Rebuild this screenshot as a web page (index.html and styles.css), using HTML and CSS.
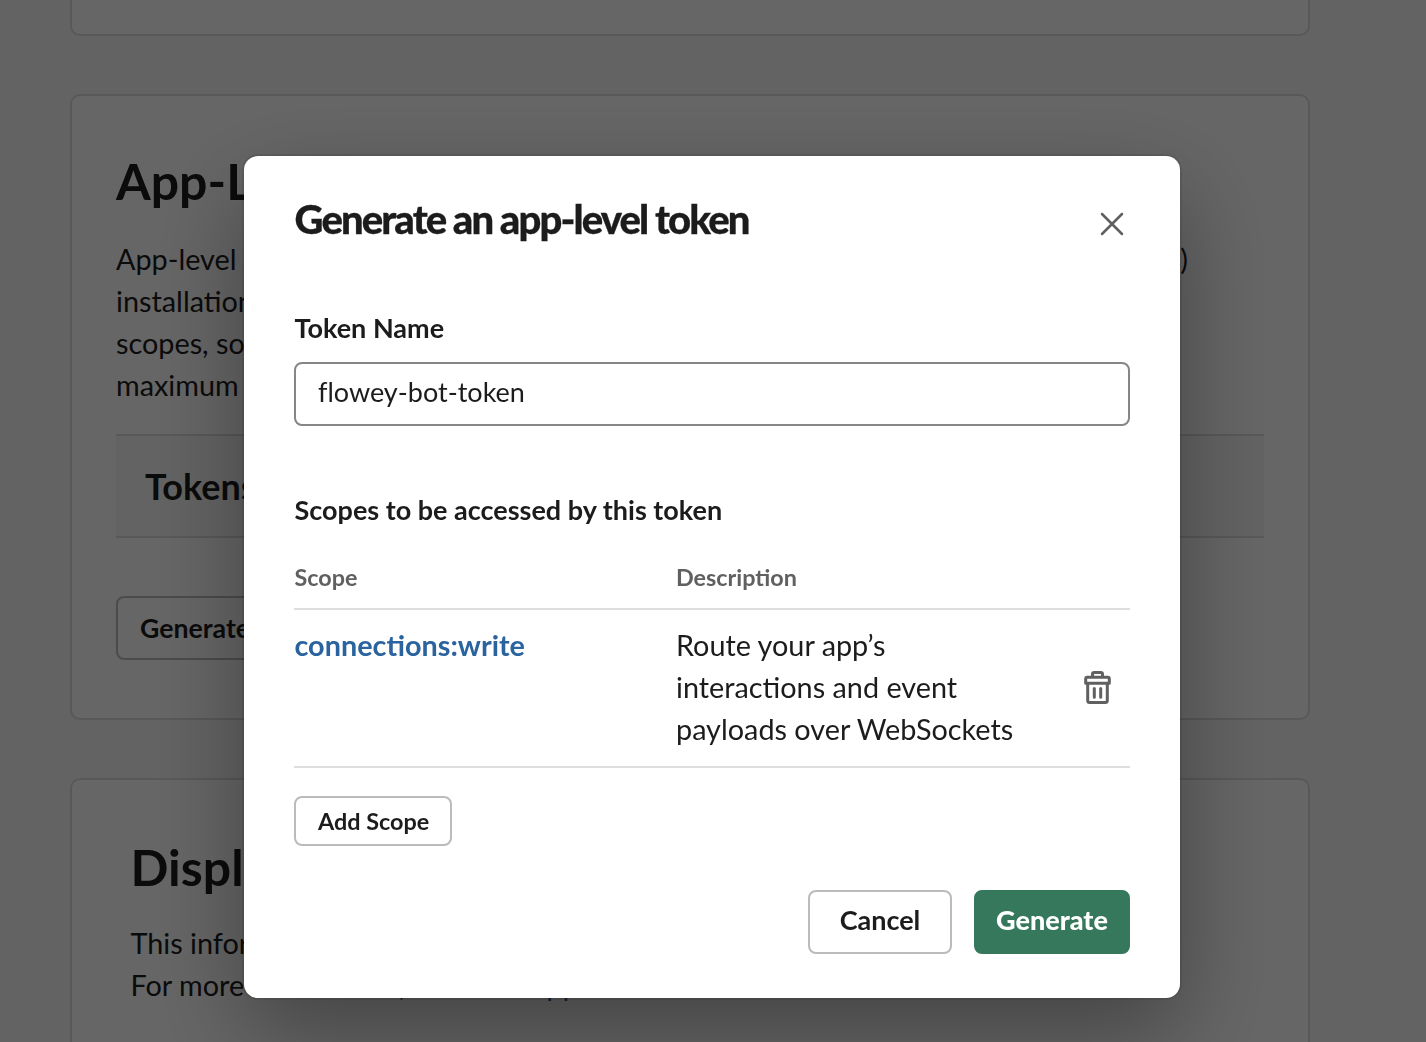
FILE: index.html
```html
<!DOCTYPE html>
<html lang="en">
<head>
<meta charset="utf-8">
<title>App-Level Tokens</title>
<link rel="stylesheet" href="styles.css">
</head>
<body>
<main class="page">
  <section class="card card-credentials"></section>
  <section class="card card-tokens">
    <h2 class="card-title">App-Level Tokens</h2>
    <p class="card-text">
      <span class="line line-split"><span>App-level tokens allow your app to use platform features</span><span>)</span></span>
      <span class="line">installations. Each app-level token can carry a set of</span>
      <span class="line">scopes, so you can create one for each use, up to a</span>
      <span class="line">maximum of 10 tokens per app.</span>
    </p>
    <div class="token-bar">Tokens</div>
    <button class="btn btn-page">Generate Token and Scopes</button>
  </section>
  <section class="card card-display">
    <h2 class="card-title">Display Information</h2>
    <p class="card-text">
      <span class="line">This information will be shown in the Slack App Directory.</span>
      <span class="line">For more information, view our <a class="guide">App Detail Guidelines</a></span>
    </p>
  </section>
</main>
<div class="overlay">
  <div class="modal" role="dialog">
    <header class="modal-head">
      <h1 class="modal-title">Generate an app-level token</h1>
      <svg class="close" viewBox="0 0 24 24"><path d="M2 2L22 22M22 2L2 22"/></svg>
    </header>
    <label class="label" for="name">Token Name</label>
    <input class="input" id="name" value="flowey-bot-token">
    <h3 class="label label-scopes">Scopes to be accessed by this token</h3>
    <div class="row row-head"><span>Scope</span><span>Description</span></div>
    <div class="row row-scope">
      <a class="scope">connections:write</a>
      <span class="desc">Route your app’s interactions and event payloads over WebSockets</span>
      <svg class="trash" viewBox="0 0 28 34"><path d="M8.500 6V3.200Q8.500 1.500 10.200 1.500H16.800Q18.500 1.500 18.500 3.200V6M3.200 6.300H23.800Q25.300 6.300 25.300 7.800V12.200H1.700V7.800Q1.700 6.300 3.200 6.300ZM3.700 12.500V29.500Q3.700 31.500 5.700 31.500H21.300Q23.300 31.500 23.300 29.500V12.500M10.300 17.500V26.300M16.700 17.500V26.300"/></svg>
    </div>
    <button class="btn btn-small">Add Scope</button>
    <footer class="actions">
      <button class="btn btn-cancel">Cancel</button>
      <button class="btn btn-primary">Generate</button>
    </footer>
  </div>
</div>
</body>
</html>
```

FILE: styles.css
```css
* { box-sizing: border-box; }
html, body { height: 100%; margin: 0; overflow: hidden; }
body {
  background: #f8f8f8;
  color: #1d1c1d;
  font-family: Lato, sans-serif;
  font-size: 28.8px;
  line-height: 42px;
}
h1, h2, h3, p { margin: 0; }
.page {
  width: 1240px;
  height: 1042px;
  margin-left: 70px;
  display: flex;
  flex-direction: column;
  gap: 58px;
  overflow: hidden;
}
.card {
  flex: none;
  background: #fff;
  border: 2px solid #ddd;
  border-radius: 10px;
}
.card-credentials { height: 36px; border-top: 0; border-radius: 0 0 10px 10px; }
.card-tokens { height: 626px; padding: 55px 44px 0; }
.card-display { height: 264px; padding: 57px 58.5px 0; border-bottom: 0; border-radius: 10px 10px 0 0; }
.card-title { font-size: 50px; line-height: 60px; font-weight: 700; white-space: nowrap; }
.card-text { margin-top: 27px; }
.card-display .card-text { margin-top: 25px; }
.line { display: block; white-space: nowrap; }
.line-split { display: flex; justify-content: space-between; width: 1072px; }
.guide { color: #1264a3; }
.token-bar {
  height: 104px;
  margin-top: 28px;
  padding: 0 29px;
  border: solid #ddd;
  border-width: 2px 0;
  background: #f8f8f8;
  font-size: 36px;
  font-weight: 700;
  line-height: 100px;
}
.btn {
  display: block;
  border: 2px solid #bbb;
  border-radius: 8px;
  background: #fff;
  color: #1d1c1d;
  font: 700 27px/30px Lato, sans-serif;
  padding: 0 22px;
  white-space: nowrap;
}
.btn-page { height: 64px; margin-top: 58px; font-size: 26.7px; }
.overlay {
  position: fixed;
  inset: 0;
  padding: 156px 0 0 244px;
  background: rgba(0, 0, 0, .6);
}
.modal {
  width: 936px;
  height: 842px;
  padding: 0 50px;
  border-radius: 14px;
  background: #fff;
  box-shadow: 0 0 0 2px rgba(29, 28, 29, .13), 0 36px 96px rgba(0, 0, 0, .35);
}
.modal-head {
  display: flex;
  align-items: flex-start;
  justify-content: space-between;
  height: 154px;
  padding: 38px 6.5px 0 .6px;
}
.modal-title { font-size: 40px; font-weight: 900; line-height: 50px; letter-spacing: -1.88px; -webkit-text-stroke: .3px #1d1c1d; }
.close { width: 24px; height: 24px; margin-top: 17.5px; fill: none; stroke: #616061; stroke-width: 2.5; stroke-linecap: round; }
.label { display: block; padding-left: .5px; font-size: 27px; line-height: 36px; font-weight: 700; }
.input {
  display: block;
  width: 100%;
  height: 64px;
  margin: 16px 0 66px;
  padding: 0 22px 6px;
  border: 2px solid #868686;
  border-radius: 8px;
  background: #fff;
  color: #1d1c1d;
  font: 27px Lato, sans-serif;
  font-variant-ligatures: none;
}
.row { display: grid; grid-template-columns: 382px 1fr 46px; border-bottom: 2px solid #ddd; }
.row-head { height: 82px; padding-top: 31px; font-size: 23.35px; font-weight: 700; color: #616061; line-height: 36px; }
.row-head span:first-child, .scope { padding-left: .5px; }
.row-scope { height: 158px; padding-top: 14px; align-items: start; }
.scope { color: #2b639f; font-weight: 700; }
.desc { width: 345px; }
.trash { width: 28px; height: 34px; margin-top: 47px; fill: none; stroke: #616061; stroke-width: 3; stroke-linecap: round; stroke-linejoin: round; }
.btn-small { width: 158px; height: 50px; margin-top: 28px; font-size: 23.4px; }
.actions { display: flex; justify-content: flex-end; gap: 22px; margin-top: 44px; }
.actions .btn { height: 64px; padding-bottom: 4px; }
.btn-cancel { width: 144px; }
.actions .btn-primary { width: 156px; padding-left: 0; padding-right: 0; border-color: #35785b; background: #35785b; color: #fff; font-weight: 900; }
```
